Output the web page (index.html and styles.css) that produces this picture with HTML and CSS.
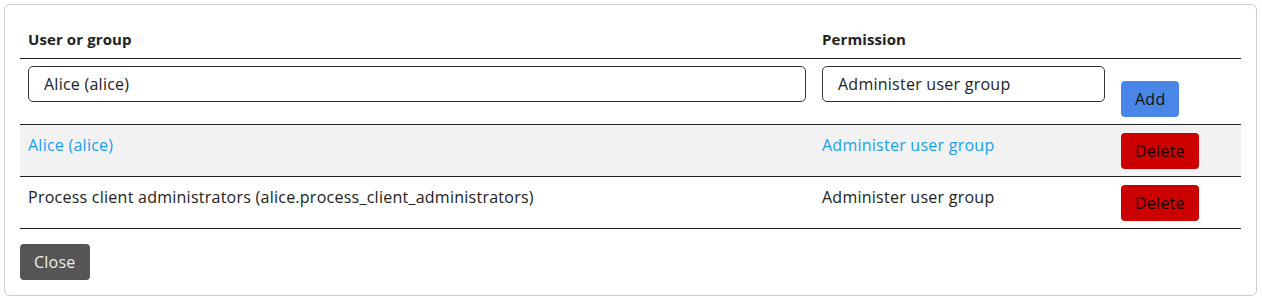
FILE: index.html
```html
<!DOCTYPE html>
<html lang="en">
<head>
<meta charset="utf-8">
<title>Permissions</title>
<link rel="stylesheet" href="styles.css">
</head>
<body>
<div class="card">
  <table class="perm-table">
    <colgroup>
      <col class="col-user">
      <col class="col-perm">
      <col class="col-act">
    </colgroup>
    <thead>
      <tr>
        <th>User or group</th>
        <th>Permission</th>
        <th></th>
      </tr>
    </thead>
    <tbody>
      <tr class="add-row">
        <td><input class="field" type="text" value="Alice (alice)"></td>
        <td><input class="field" type="text" value="Administer user group"></td>
        <td class="bottom"><button class="btn btn-add">Add</button></td>
      </tr>
      <tr class="row-active">
        <td><a class="link" href="#">Alice (alice)</a></td>
        <td><a class="link" href="#">Administer user group</a></td>
        <td><button class="btn btn-delete">Delete</button></td>
      </tr>
      <tr>
        <td>Process client administrators (alice.process_client_administrators)</td>
        <td>Administer user group</td>
        <td><button class="btn btn-delete">Delete</button></td>
      </tr>
    </tbody>
  </table>
  <button class="btn btn-close">Close</button>
</div>
</body>
</html>
```

FILE: styles.css
```css
html, body {
  background: #ffffff;
}
body {
  margin: 4px 5px 4px 4px;
  font-family: "Open Sans", "Liberation Sans", sans-serif;
  font-size: 16px;
  letter-spacing: 0.25px;
  line-height: 24px;
  color: #222222;
}
.card {
  border: 1px solid #cccccc;
  border-radius: 6px;
  padding: 15px;
}
.perm-table {
  width: 100%;
  border-collapse: collapse;
  table-layout: fixed;
}
.col-user { width: 794px; }
.col-perm { width: 299px; }
.col-act { width: 128px; }
.perm-table th {
  text-align: left;
  font-size: 15px;
  letter-spacing: 0.1px;
  font-weight: 700;
  padding: 7px 8px 7px;
  border-bottom: 1px solid #222222;
  color: #222222;
}
.perm-table td {
  padding: 8px 8px 7px;
  vertical-align: top;
  border-bottom: 1px solid #222222;
}
.perm-table td.bottom {
  vertical-align: bottom;
}
.row-active td {
  background: #f2f2f2;
}
.field {
  display: block;
  box-sizing: border-box;
  width: 100%;
  height: 36px;
  margin: -1px 0 15px;
  padding: 0 15px;
  border: 1px solid #333333;
  border-radius: 5px;
  font: inherit;
  letter-spacing: inherit;
  color: #222222;
  background: #ffffff;
}
.perm-table td .link,
.perm-table td.text {
  position: static;
}
.link {
  color: #1a9ff0;
  text-decoration: none;
}
.btn {
  display: inline-block;
  border: none;
  border-radius: 4px;
  padding: 6px 14px;
  font: inherit;
  letter-spacing: inherit;
  line-height: 24px;
  cursor: pointer;
}
.btn-add {
  background: #4a86e8;
  color: #111111;
}
.btn-delete {
  background: #cc0000;
  color: #1a0000;
}
.btn-close {
  margin-top: 15px;
  background: #555555;
  color: #eeeeee;
}
```
